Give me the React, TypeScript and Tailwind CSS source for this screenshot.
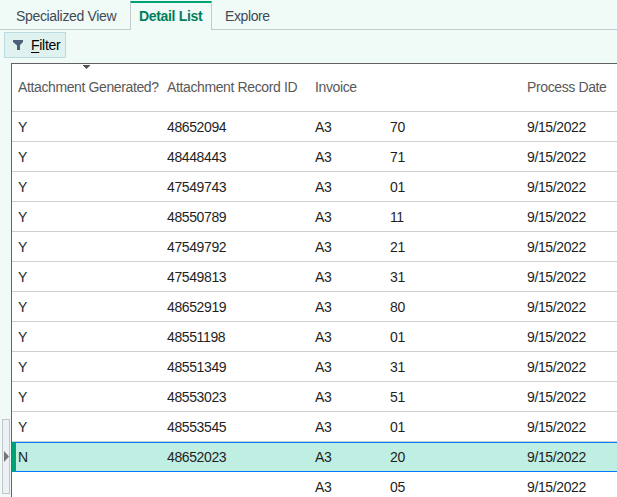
const rows: [string, string, string][] = [
  ['Y', '48652094', '70'],
  ['Y', '48448443', '71'],
  ['Y', '47549743', '01'],
  ['Y', '48550789', '11'],
  ['Y', '47549792', '21'],
  ['Y', '47549813', '31'],
  ['Y', '48652919', '80'],
  ['Y', '48551198', '01'],
  ['Y', '48551349', '31'],
  ['Y', '48553023', '51'],
  ['Y', '48553545', '01'],
  ['N', '48652023', '20'],
  ['', '', '05'],
];

const columns = 'grid grid-cols-[149px_148px_75px_137px_1fr] items-center whitespace-nowrap';

function Tabs() {
  return (
    <div className="flex h-[30px] shrink-0 tracking-[-0.33px] text-[#3f4a56]">
      <div className="w-[130px] border-b border-[#c6caca] pt-[7px] pl-4 leading-[18px]">Specialized View</div>
      <div className="mt-px w-[82px] border-x border-t-2 border-x-[#c6caca] border-t-[#00a376] pt-1 pl-2 font-bold leading-[18px] text-[#007f5c]">
        Detail List
      </div>
      <div className="flex-1 border-b border-[#c6caca] pt-[7px] pl-[13px] leading-[18px] tracking-[-0.4px]">Explore</div>
    </div>
  );
}

function Row({ row, selected }: { row: [string, string, string]; selected: boolean }) {
  return (
    <div
      className={`${columns} h-[30px] shrink-0 ${
        selected
          ? 'border-y border-l-4 border-y-[#007bff] border-l-[#00a376] bg-[#bfeee2] pl-0.5'
          : 'border-b border-[#cfcfcf] pt-px pl-1.5'
      }`}
    >
      <span>{row[0]}</span>
      <span>{row[1]}</span>
      <span>A3</span>
      <span>{row[2]}</span>
      <span>9/15/2022</span>
    </div>
  );
}

export default function App() {
  return (
    <div className="flex h-[497px] w-[617px] flex-col overflow-hidden bg-[#f0faf7] font-['Liberation_Sans',Arial,sans-serif] text-[14px] leading-[18px] tracking-[-0.38px] text-[#1f1f1f]">
      <Tabs />
      <div className="h-[33px] shrink-0 pt-0.5 pl-1">
        <button className="flex h-[26px] w-[62px] items-center border border-[#bcdbe0] bg-[#dff2f0] pl-2 tracking-[-0.28px] text-black">
          <svg width="11" height="11" viewBox="0 0 11 11" className="mr-[7px] shrink-0">
            <path d="M0 0H10V2L7 5V10H4V5.5L0 2Z" fill="#4a6078" />
          </svg>
          <span>
            <span className="underline decoration-1 underline-offset-2">F</span>ilter
          </span>
        </button>
      </div>
      <div className="flex min-h-0 flex-1">
        <div className="w-[11px] shrink-0 pt-[356px] pl-0.5">
          <div className="flex h-[75px] w-2 items-center border border-[#bfc5c8] bg-[#edf1f5] pl-px">
            <svg width="5" height="11" viewBox="0 0 5 11" className="shrink-0">
              <path d="M0 0L5 5.5L0 11Z" fill="#737373" />
            </svg>
          </div>
        </div>
        <div className="flex min-w-0 flex-1 flex-col overflow-hidden border-t border-l border-[#626262] bg-white">
          <div className={`${columns} relative h-12 shrink-0 border-b border-[#cfcfcf] pb-px pl-1.5 text-[#595959]`}>
            <svg width="7" height="4" viewBox="0 0 7 4" className="absolute top-px left-[71px]">
              <path d="M0 0H7V.5L3.5 4L0 .5Z" fill="#505050" />
            </svg>
            <span>Attachment Generated?</span>
            <span>Attachment Record ID</span>
            <span>Invoice</span>
            <span />
            <span>Process Date</span>
          </div>
          {rows.map((row, i) => (
            <Row key={i} row={row} selected={row[0] === 'N'} />
          ))}
        </div>
      </div>
    </div>
  );
}
